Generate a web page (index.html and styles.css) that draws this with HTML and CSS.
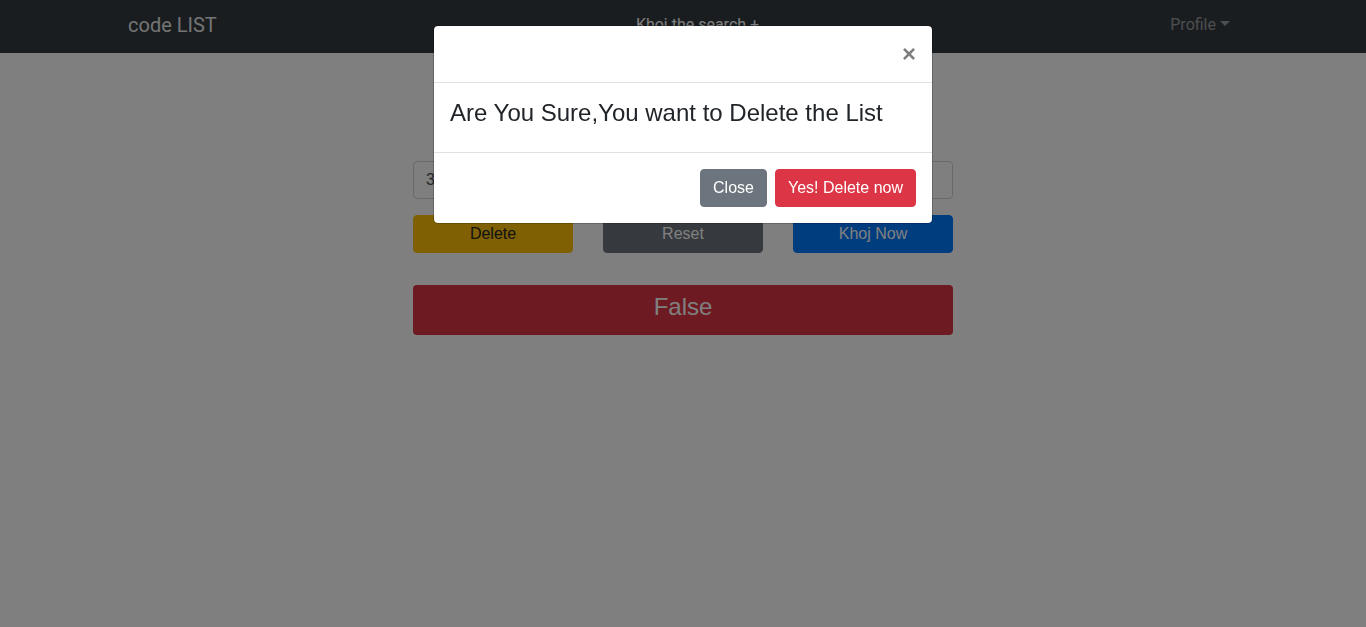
FILE: index.html
```html
<!DOCTYPE html>
<html lang="en">
<head>
<meta charset="utf-8">
<title>code LIST</title>
<link rel="stylesheet" href="styles.css">
</head>
<body>
<nav class="navbar">
  <div class="nav-container">
    <a class="brand" href="#">code LIST</a>
    <a class="nav-link active center-link" href="#">Khoj the search +</a>
    <a class="nav-link dropdown-toggle" href="#">Profile</a>
  </div>
</nav>

<main class="content">
  <div class="col">
    <input class="form-control" type="text" value="3">
    <div class="btn-row">
      <button class="btn btn-warning">Delete</button>
      <button class="btn btn-secondary">Reset</button>
      <button class="btn btn-primary">Khoj Now</button>
    </div>
    <div class="result">False</div>
  </div>
</main>

<div class="backdrop"></div>

<div class="modal">
  <div class="modal-header">
    <button class="close" type="button">&times;</button>
  </div>
  <div class="modal-body">
    <h4 class="modal-text">Are You Sure,You want to Delete the List</h4>
  </div>
  <div class="modal-footer">
    <button class="btn btn-secondary">Close</button>
    <button class="btn btn-danger">Yes! Delete now</button>
  </div>
</div>
</body>
</html>
```

FILE: styles.css
```css
* { box-sizing: border-box; }

html, body {
  margin: 0;
  padding: 0;
  height: 100%;
}

body {
  font-family: "Liberation Sans", Arial, sans-serif;
  font-size: 16px;
  line-height: 1.5;
  color: #212529;
  background: #fff;
  overflow: hidden;
}

a { text-decoration: none; }

.navbar {
  background: #343a40;
  height: 53px;
}

.nav-container {
  max-width: 1140px;
  margin: 0 auto;
  padding: 0 15px 4px;
  height: 100%;
  display: flex;
  align-items: center;
  font-family: Roboto, "Liberation Sans", sans-serif;
}

.brand {
  font-size: 20px;
  line-height: 30px;
  color: rgba(255, 255, 255, 0.9);
  margin-right: 16px;
}

.nav-link {
  padding: 8px;
  font-size: 16px;
  line-height: 24px;
  color: rgba(255, 255, 255, 0.5);
}

.nav-link.active { color: #fff; }

.center-link { margin: 0 auto; }

.dropdown-toggle::after {
  content: "";
  display: inline-block;
  margin-left: 4px;
  vertical-align: 4px;
  border-top: 5px solid;
  border-left: 5px solid transparent;
  border-right: 5px solid transparent;
}

.content {
  display: flex;
  justify-content: center;
  padding-top: 108px;
}

.col {
  width: 540px;
  display: flex;
  flex-direction: column;
}

.form-control {
  height: 38px;
  width: 100%;
  padding: 6px 12px;
  font-family: inherit;
  font-size: 16px;
  color: #495057;
  border: 1px solid #ced4da;
  border-radius: 4px;
  background: #fff;
}

.btn-row {
  margin-top: 16px;
  display: flex;
  justify-content: space-between;
}

.btn-row .btn { width: 160px; }

.btn {
  height: 38px;
  padding: 6px 12px;
  font-family: "Liberation Sans", Arial, sans-serif;
  font-size: 16px;
  line-height: 24px;
  border: 1px solid transparent;
  border-radius: 4px;
  cursor: pointer;
}

.btn-warning { background: #ffc107; border-color: #ffc107; color: #212529; }
.btn-secondary { background: #6c757d; border-color: #6c757d; color: #fff; }
.btn-primary { background: #007bff; border-color: #007bff; color: #fff; }
.btn-danger { background: #dc3545; border-color: #dc3545; color: #fff; }

.result {
  margin-top: 32px;
  height: 50px;
  padding-bottom: 6px;
  background: #dc3545;
  color: #fff;
  border-radius: 4px;
  font-size: 24px;
  display: flex;
  align-items: center;
  justify-content: center;
}

.backdrop {
  position: fixed;
  inset: 0;
  background: rgba(0, 0, 0, 0.5);
}

.modal {
  position: fixed;
  top: 25px;
  left: 433px;
  width: 500px;
  background: #fff;
  background-clip: padding-box;
  border: 1px solid rgba(0, 0, 0, 0.2);
  border-radius: 5px;
  display: flex;
  flex-direction: column;
}

.modal-header {
  display: flex;
  justify-content: flex-end;
  border-bottom: 1px solid #dee2e6;
  height: 57px;
}

.close {
  padding: 16px;
  background: transparent;
  border: 0;
  font-family: "Liberation Sans", Arial, sans-serif;
  font-size: 24px;
  font-weight: 700;
  line-height: 1;
  color: #000;
  opacity: 0.5;
  text-shadow: 0 1px 0 #fff;
  cursor: pointer;
}

.modal-body {
  padding: 16px;
  border-bottom: 1px solid #dee2e6;
}

.modal-text {
  margin: 0 0 8px;
  font-size: 24px;
  font-weight: 400;
  line-height: 1.2;
  color: #212529;
}

.modal-footer {
  display: flex;
  justify-content: flex-end;
  align-items: center;
  padding: 12px;
}

.modal-footer .btn { margin: 4px; }
```
